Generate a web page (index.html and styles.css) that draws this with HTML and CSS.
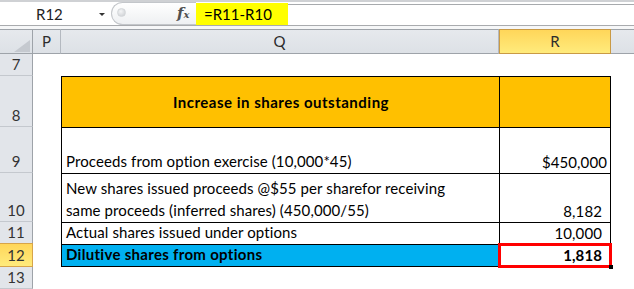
FILE: index.html
```html
<!DOCTYPE html>
<html>
<head>
<meta charset="utf-8">
<link rel="stylesheet" href="styles.css">
</head>
<body>
<div class="app">
  <div class="fbar">
    <div class="namebox"><span class="name">R12</span><span class="arrow"></span></div>
    <div class="grip"><span class="dot"></span><span class="fx"><i>f</i><i class="x">x</i></span></div>
    <div class="formula">
      <span class="fval">=R11-R10</span>
      <span class="frest"></span>
    </div>
  </div>
  <div class="gap"></div>
  <div class="sheet">
    <div class="ch corner"><span class="tri"></span></div>
    <div class="ch">P</div>
    <div class="ch">Q</div>
    <div class="ch sel">R</div>
    <div class="ch last"></div>

    <div class="rh">7</div><div class="c"></div><div class="c"></div><div class="c"></div><div class="c"></div>

    <div class="rh">8</div><div class="c"></div>
    <div class="c t tq head">Increase in shares outstanding</div>
    <div class="c t tr head"></div>
    <div class="c"></div>

    <div class="rh">9</div><div class="c"></div>
    <div class="c t tq">Proceeds from option exercise (10,000*45)</div>
    <div class="c t tr num num-cur">$450,000</div>
    <div class="c"></div>

    <div class="rh">10</div><div class="c"></div>
    <div class="c t tq">New shares issued proceeds @$55 per sharefor receiving<br>same proceeds (inferred shares) (450,000/55)</div>
    <div class="c t tr num">8,182</div>
    <div class="c"></div>

    <div class="rh">11</div><div class="c"></div>
    <div class="c t tq">Actual shares issued under options</div>
    <div class="c t tr num">10,000</div>
    <div class="c"></div>

    <div class="rh sel">12</div><div class="c"></div>
    <div class="c t tq blue bot bold dil">Dilutive shares from options</div>
    <div class="c t tr num bot bold active">1,818<span class="hl"></span><span class="handle"></span></div>
    <div class="c"></div>

    <div class="rh">13</div><div class="c"></div><div class="c"></div><div class="c"></div><div class="c"></div>
  </div>
</div>
</body>
</html>
```

FILE: styles.css
```css
* { box-sizing: border-box; }
html, body { margin: 0; padding: 0; background: #fff; }
body { font-family: Lato, "Liberation Sans", sans-serif; font-size: 15px; color: #000; }
.app { width: 634px; height: 289px; overflow: hidden; position: relative; }

.fbar {
  height: 26px;
  display: flex;
  border-top: 2px solid #cfd1d4;
  border-bottom: 1px solid #a9abae;
  background: #fff;
}
.namebox {
  width: 108px;
  display: flex;
  align-items: center;
  position: relative;
}
.name { margin-left: 36px; font-size: 15px; color: #222; }
.arrow {
  position: absolute;
  left: 99px; top: 11px;
  width: 0; height: 0;
  border-left: 3px solid transparent;
  border-right: 3px solid transparent;
  border-top: 3px solid #333;
}
.grip {
  margin-left: 3px;
  width: 85px;
  border: 1px solid #c3c6ca;
  border-right: none;
  border-radius: 12px 0 0 12px;
  background: linear-gradient(#ffffff, #eef0f2);
  display: flex;
  align-items: center;
  position: relative;
}
.dot {
  position: absolute; left: 5px; top: 5px;
  width: 9px; height: 9px; border-radius: 50%;
  background: radial-gradient(circle at 40% 35%, #f4f5f6, #c9ccd0);
  border: 1px solid #d4d7da;
}
.fx {
  position: absolute; left: 65px; top: 1px;
  font-family: "DejaVu Serif", "Liberation Serif", serif;
  font-size: 15px; color: #505050; font-weight: bold;
}
.fx .x { font-size: 10px; }
.formula { flex: 1; display: flex; align-items: flex-start; }
.fval {
  margin-top: 1px;
  width: 92px; height: 22px;
  background: #ffff00;
  padding-left: 8px;
  line-height: 22px;
  font-size: 15px;
}
.frest { flex: 1; margin-top: 2px; border-top: 1px solid #a7aaad; }
.gap { height: 3px; background: #f6f7f8; }

.sheet {
  display: grid;
  grid-template-columns: 33px 28px 438px 112px 23px;
  grid-template-rows: 25px 22px 51px 46px 49px 22px 23px 22px;
}
.ch {
  background: linear-gradient(#e6e9ed, #dde1e6);
  border-top: 1px solid #9ea3a9;
  border-bottom: 1px solid #9ea3a9;
  border-right: 1px solid #b4b9c0;
  text-align: center;
  line-height: 22px;
  color: #2c2c2c;
  font-size: 15px;
}
.ch.corner { position: relative; border-right-color: #9ea3a9; }
.tri {
  position: absolute; left: 14px; top: 10px;
  width: 16px; height: 12px;
  background: #c5c9cf;
  clip-path: polygon(100% 0, 100% 100%, 0 100%);
}
.ch.sel {
  background: linear-gradient(#ffd65a, #ffeb7c);
  border: 1px solid #c99a45;
}
.ch.last { border-right: none; }

.rh {
  background: #e2e5ea;
  border-right: 1px solid #9ea3a9;
  border-bottom: 1px solid #c4c8ce;
  text-align: center;
  color: #333;
  display: flex;
  align-items: flex-end;
  justify-content: center;
  line-height: 20px;
  padding-bottom: 1px;
}
.rh.sel {
  background: linear-gradient(#ffd65a, #ffeb7c);
  border-top: 1px solid #d7a449;
  border-bottom: 1px solid #d7a449;
  border-right: 1px solid #d7a449;
  margin-top: -1px;
}
.c { background: #fff; }
.t {
  border-top: 1px solid #000;
  border-left: 1px solid #000;
  display: flex;
  flex-direction: column;
  justify-content: flex-end;
  line-height: 20px;
  padding: 0 3px 1px 4px;
  white-space: nowrap;
  letter-spacing: 0.1px;
}
.tq.t { line-height: 22px; }
.tr { border-right: 1px solid #000; }
.bot { border-bottom: 1px solid #000; }
.head {
  background: #ffc000;
  font-weight: bold;
  justify-content: center;
  text-align: center;
  letter-spacing: 0.5px;
}
.num { text-align: right; padding-right: 8px; }
.num-cur { padding-right: 3px; }
.blue { background: #00b0f0; }
.bold { font-weight: bold; }
.dil { letter-spacing: 0.3px; }
.active { position: relative; }
.hl {
  position: absolute;
  left: -2px; top: -2px; right: -2px; bottom: -2px;
  border: 3px solid #ff0000;
}
.handle {
  position: absolute;
  right: -3px; bottom: -3px;
  width: 4px; height: 4px;
  background: #000;
}
```
